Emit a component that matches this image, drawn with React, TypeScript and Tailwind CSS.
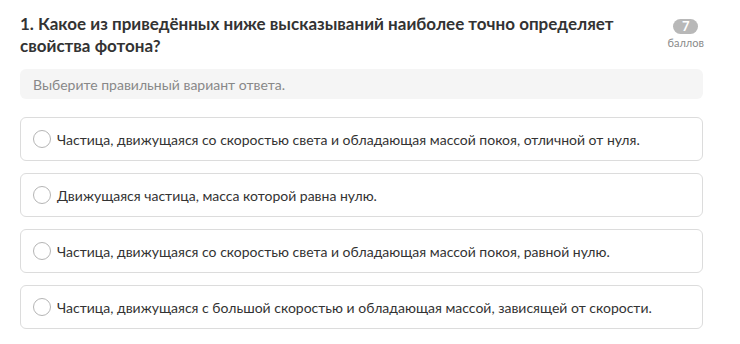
import React from 'react';

const options = [
  'Частица, движущаяся со скоростью света и обладающая массой покоя, отличной от нуля.',
  'Движущаяся частица, масса которой равна нулю.',
  'Частица, движущаяся со скоростью света и обладающая массой покоя, равной нулю.',
  'Частица, движущаяся с большой скоростью и обладающая массой, зависящей от скорости.',
];

export default function App() {
  return (
    <div className="w-[740px] h-[344px] bg-white px-5 pt-[13px]" style={{ fontFamily: 'Lato, "Noto Sans", sans-serif' }}>
      <div className="w-[684px] flex items-start justify-between">
        <h2 className="w-[620px] text-[17px] leading-[22px] font-bold text-[#333333]">
          1. Какое из приведённых ниже высказываний наиболее точно определяет свойства фотона?
        </h2>
        <div className="flex flex-col items-center mt-[6px]">
          <span className="w-[25px] h-[15px] rounded-full bg-[#b8b8b8] text-white text-[13px] font-bold leading-[15px] text-center">
            7
          </span>
          <span className="text-[11px] leading-[14px] text-[#8a8a8a] mt-[2px]">баллов</span>
        </div>
      </div>

      <div className="mt-[12px] w-[683px] h-[30px] rounded-md bg-[#f5f5f5] px-[13px] flex items-center text-[14px] text-[#888888]">
        Выберите правильный вариант ответа.
      </div>

      <div className="mt-[18px] w-[683px] flex flex-col gap-3">
        {options.map((text) => (
          <label
            key={text}
            className="h-[44px] rounded-md border border-[#dcdcdc] bg-white flex items-center pl-3 gap-[6px] cursor-pointer"
          >
            <span className="w-[18px] h-[18px] rounded-full border border-[#b5b5b5] bg-white shrink-0" />
            <span className="text-[14px] text-[#333333]">{text}</span>
          </label>
        ))}
      </div>
    </div>
  );
}
